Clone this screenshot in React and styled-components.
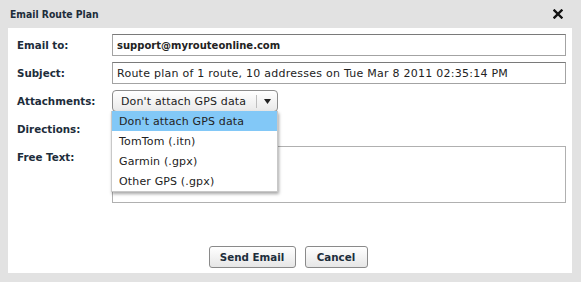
import styled, { createGlobalStyle } from "styled-components";

const GlobalStyle = createGlobalStyle`
  html, body {
    margin: 0;
    padding: 0;
    background: #e2e2e2;
  }
  body {
    font-family: "DejaVu Sans", Verdana, sans-serif;
    font-size: 11px;
  }
`;

const options = [
  "Don't attach GPS data",
  "TomTom (.itn)",
  "Garmin (.gpx)",
  "Other GPS (.gpx)",
];

function App() {
  return (
    <>
      <GlobalStyle />
      <Dialog>
        <TitleBar>
          <Title>Email Route Plan</Title>
          <CloseButton>
            <svg width="10" height="10" viewBox="0 0 10 10">
              <path d="M1.5 1.5 L8.5 8.5 M8.5 1.5 L1.5 8.5" stroke="#111" strokeWidth="2.4" strokeLinecap="square" />
            </svg>
          </CloseButton>
        </TitleBar>
        <Panel>
          <Form>
            <Label>Email to:</Label>
            <Input $bold>support@myrouteonline.com</Input>
            <Label>Subject:</Label>
            <Input>Route plan of 1 route, 10 addresses on Tue Mar 8 2011 02:35:14 PM</Input>
            <Label>Attachments:</Label>
            <SelectWrap>
              <Select>
                <SelectText>Don't attach GPS data</SelectText>
                <SelectArrow>
                  <svg width="7" height="5" viewBox="0 0 7 5">
                    <path d="M0 0 L7 0 L3.5 5 Z" fill="#222" />
                  </svg>
                </SelectArrow>
              </Select>
              <Menu>
                {options.map((o, i) => (
                  <MenuItem key={o} $active={i === 0}>
                    {o}
                  </MenuItem>
                ))}
              </Menu>
            </SelectWrap>
            <Label>Directions:</Label>
            <div />
            <Label>Free Text:</Label>
            <TextArea />
          </Form>
          <Buttons>
            <Button>Send Email</Button>
            <Button $narrow>Cancel</Button>
          </Buttons>
        </Panel>
      </Dialog>
    </>
  );
}

export default App;

const Dialog = styled.div`
  width: 581px;
  height: 282px;
  display: flex;
  flex-direction: column;
`;

const TitleBar = styled.div`
  height: 28px;
  display: flex;
  align-items: center;
  justify-content: space-between;
  padding: 0 18px 0 10px;
`;

const Title = styled.div`
  font-family: "DejaVu Sans Condensed", "DejaVu Sans", sans-serif;
  font-stretch: condensed;
  font-weight: bold;
  color: #1d2d3b;
  font-size: 10.3px;
`;

const CloseButton = styled.div`
  display: flex;
  align-items: center;
`;

const Panel = styled.div`
  margin: 0 9px 0 8px;
  height: 245px;
  background: #fff;
  box-sizing: border-box;
  padding: 6px 6px 0 9px;
`;

const Form = styled.div`
  display: grid;
  grid-template-columns: 95px 454px;
  grid-template-rows: 22px 22px 22px 22px 57px;
  row-gap: 6px;
`;

const Label = styled.div`
  font-weight: bold;
  color: #1d2d3b;
  padding-top: 5px;
  font-size: 10.3px;
`;

const Input = styled.div`
  box-sizing: border-box;
  border: 1px solid #a3a3a3;
  border-top-color: #7a7a7a;
  padding: 0 4px;
  display: flex;
  align-items: center;
  color: #222;
  font-size: ${(p) => (p.$bold ? "10px" : "11px")};
  letter-spacing: ${(p) => (p.$bold ? "0" : "0.25px")};
  font-weight: ${(p) => (p.$bold ? "bold" : "normal")};
  white-space: nowrap;
  overflow: hidden;
`;

const SelectWrap = styled.div`
  position: relative;
`;

const Select = styled.div`
  box-sizing: border-box;
  width: 166px;
  height: 22px;
  border: 1px solid #8c8c8c;
  border-radius: 4px;
  background: linear-gradient(#ffffff, #e9e9e9);
  display: flex;
  align-items: center;
`;

const SelectText = styled.div`
  flex: 1;
  padding-left: 8px;
  color: #222;
  font-size: 11px;
  letter-spacing: 0.15px;
`;

const SelectArrow = styled.div`
  height: 13px;
  border-left: 1px solid #bdbdbd;
  padding: 0 6px 0 7px;
  display: flex;
  align-items: center;
`;

const Menu = styled.div`
  position: absolute;
  left: -1px;
  top: 21px;
  width: 167px;
  box-sizing: border-box;
  background: #fff;
  border: 1px solid #c8c8c8;
  border-top: none;
  box-shadow: 1px 2px 3px rgba(0, 0, 0, 0.35);
  z-index: 2;
`;

const MenuItem = styled.div`
  height: 20px;
  display: flex;
  align-items: center;
  padding-left: 7px;
  color: #222;
  font-size: 11px;
  letter-spacing: 0.15px;
  background: ${(p) => (p.$active ? "#82c8f7" : "#fff")};
`;

const TextArea = styled.div`
  box-sizing: border-box;
  border: 1px solid #b0b0b0;
`;

const Buttons = styled.div`
  display: flex;
  justify-content: center;
  gap: 9px;
  margin-top: 43px;
  padding-right: 7px;
`;

const Button = styled.div`
  box-sizing: border-box;
  height: 22px;
  width: ${(p) => (p.$narrow ? "63px" : "87px")};
  border: 1px solid #8a8a8a;
  border-radius: 3px;
  background: linear-gradient(#ffffff, #e6e6e6);
  display: flex;
  align-items: center;
  justify-content: center;
  font-weight: bold;
  color: #1d2d3b;
  font-size: 10.3px;
`;
